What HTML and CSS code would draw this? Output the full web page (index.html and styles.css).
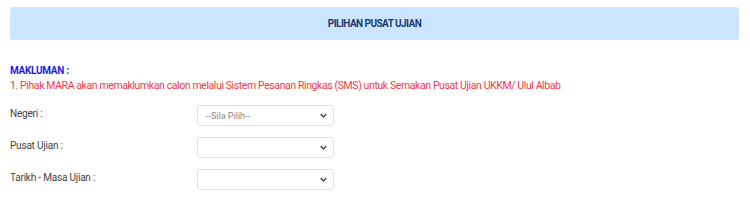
FILE: index.html
```html
<!DOCTYPE html>
<html>
<head>
<meta charset="utf-8">
<link rel="stylesheet" href="styles.css">
</head>
<body>
<div class="page">
  <div class="banner">PILIHAN PUSAT UJIAN</div>
  <div class="notice">
    <div class="notice-title">MAKLUMAN :</div>
    <div class="notice-text">1. Pihak MARA akan memaklumkan calon melalui Sistem Pesanan Ringkas (SMS) untuk Semakan Pusat Ujian UKKM/ Ulul Albab</div>
  </div>
  <div class="form">
    <div class="row">
      <label class="label">Negeri :</label>
      <div class="select"><span class="placeholder">--Sila Pilih--</span><svg class="chev" viewBox="0 0 10 6" width="7" height="5"><path d="M1 1 L5 5 L9 1" fill="none" stroke="#444" stroke-width="2"/></svg></div>
    </div>
    <div class="row">
      <label class="label">Pusat Ujian :</label>
      <div class="select"><span class="placeholder"></span><svg class="chev" viewBox="0 0 10 6" width="7" height="5"><path d="M1 1 L5 5 L9 1" fill="none" stroke="#444" stroke-width="2"/></svg></div>
    </div>
    <div class="row">
      <label class="label">Tarikh - Masa Ujian :</label>
      <div class="select"><span class="placeholder"></span><svg class="chev" viewBox="0 0 10 6" width="7" height="5"><path d="M1 1 L5 5 L9 1" fill="none" stroke="#444" stroke-width="2"/></svg></div>
    </div>
  </div>
</div>
</body>
</html>
```

FILE: styles.css
```css
html, body {
  margin: 0;
  padding: 0;
  background: #fff;
}
body {
  font-family: Roboto, "Liberation Sans", sans-serif;
}
.page {
  padding: 7px 11px 0 10px;
}
.banner {
  background: #cce5ff;
  color: #1a3a70;
  border-radius: 3px;
  height: 33px;
  display: flex;
  align-items: center;
  justify-content: center;
  font-size: 10px;
  font-weight: bold;
  letter-spacing: -0.55px;
}
.notice {
  margin-top: 24px;
}
.notice-title {
  color: #1a1aee;
  font-weight: bold;
  font-size: 10px;
  letter-spacing: -0.3px;
  line-height: 14px;
}
.notice-text {
  color: #ff3344;
  font-size: 10.5px;
  letter-spacing: -0.4px;
  line-height: 15px;
}
.form {
  margin-top: 12px;
  display: flex;
  flex-direction: column;
  gap: 11px;
}
.row {
  display: flex;
  align-items: center;
  height: 21px;
}
.label {
  width: 187px;
  color: #444;
  font-size: 10px;
  letter-spacing: -0.2px;
  position: relative;
  top: -2px;
}
.select {
  border: 1px solid #dde0e4;
  border-radius: 3px;
  display: flex;
  align-items: center;
  justify-content: space-between;
  padding: 0 6px 0 8px;
  box-sizing: border-box;
  width: 137px;
  height: 21px;
}
.placeholder {
  color: #888;
  font-size: 9px;
}
.chev {
  display: block;
}
```
